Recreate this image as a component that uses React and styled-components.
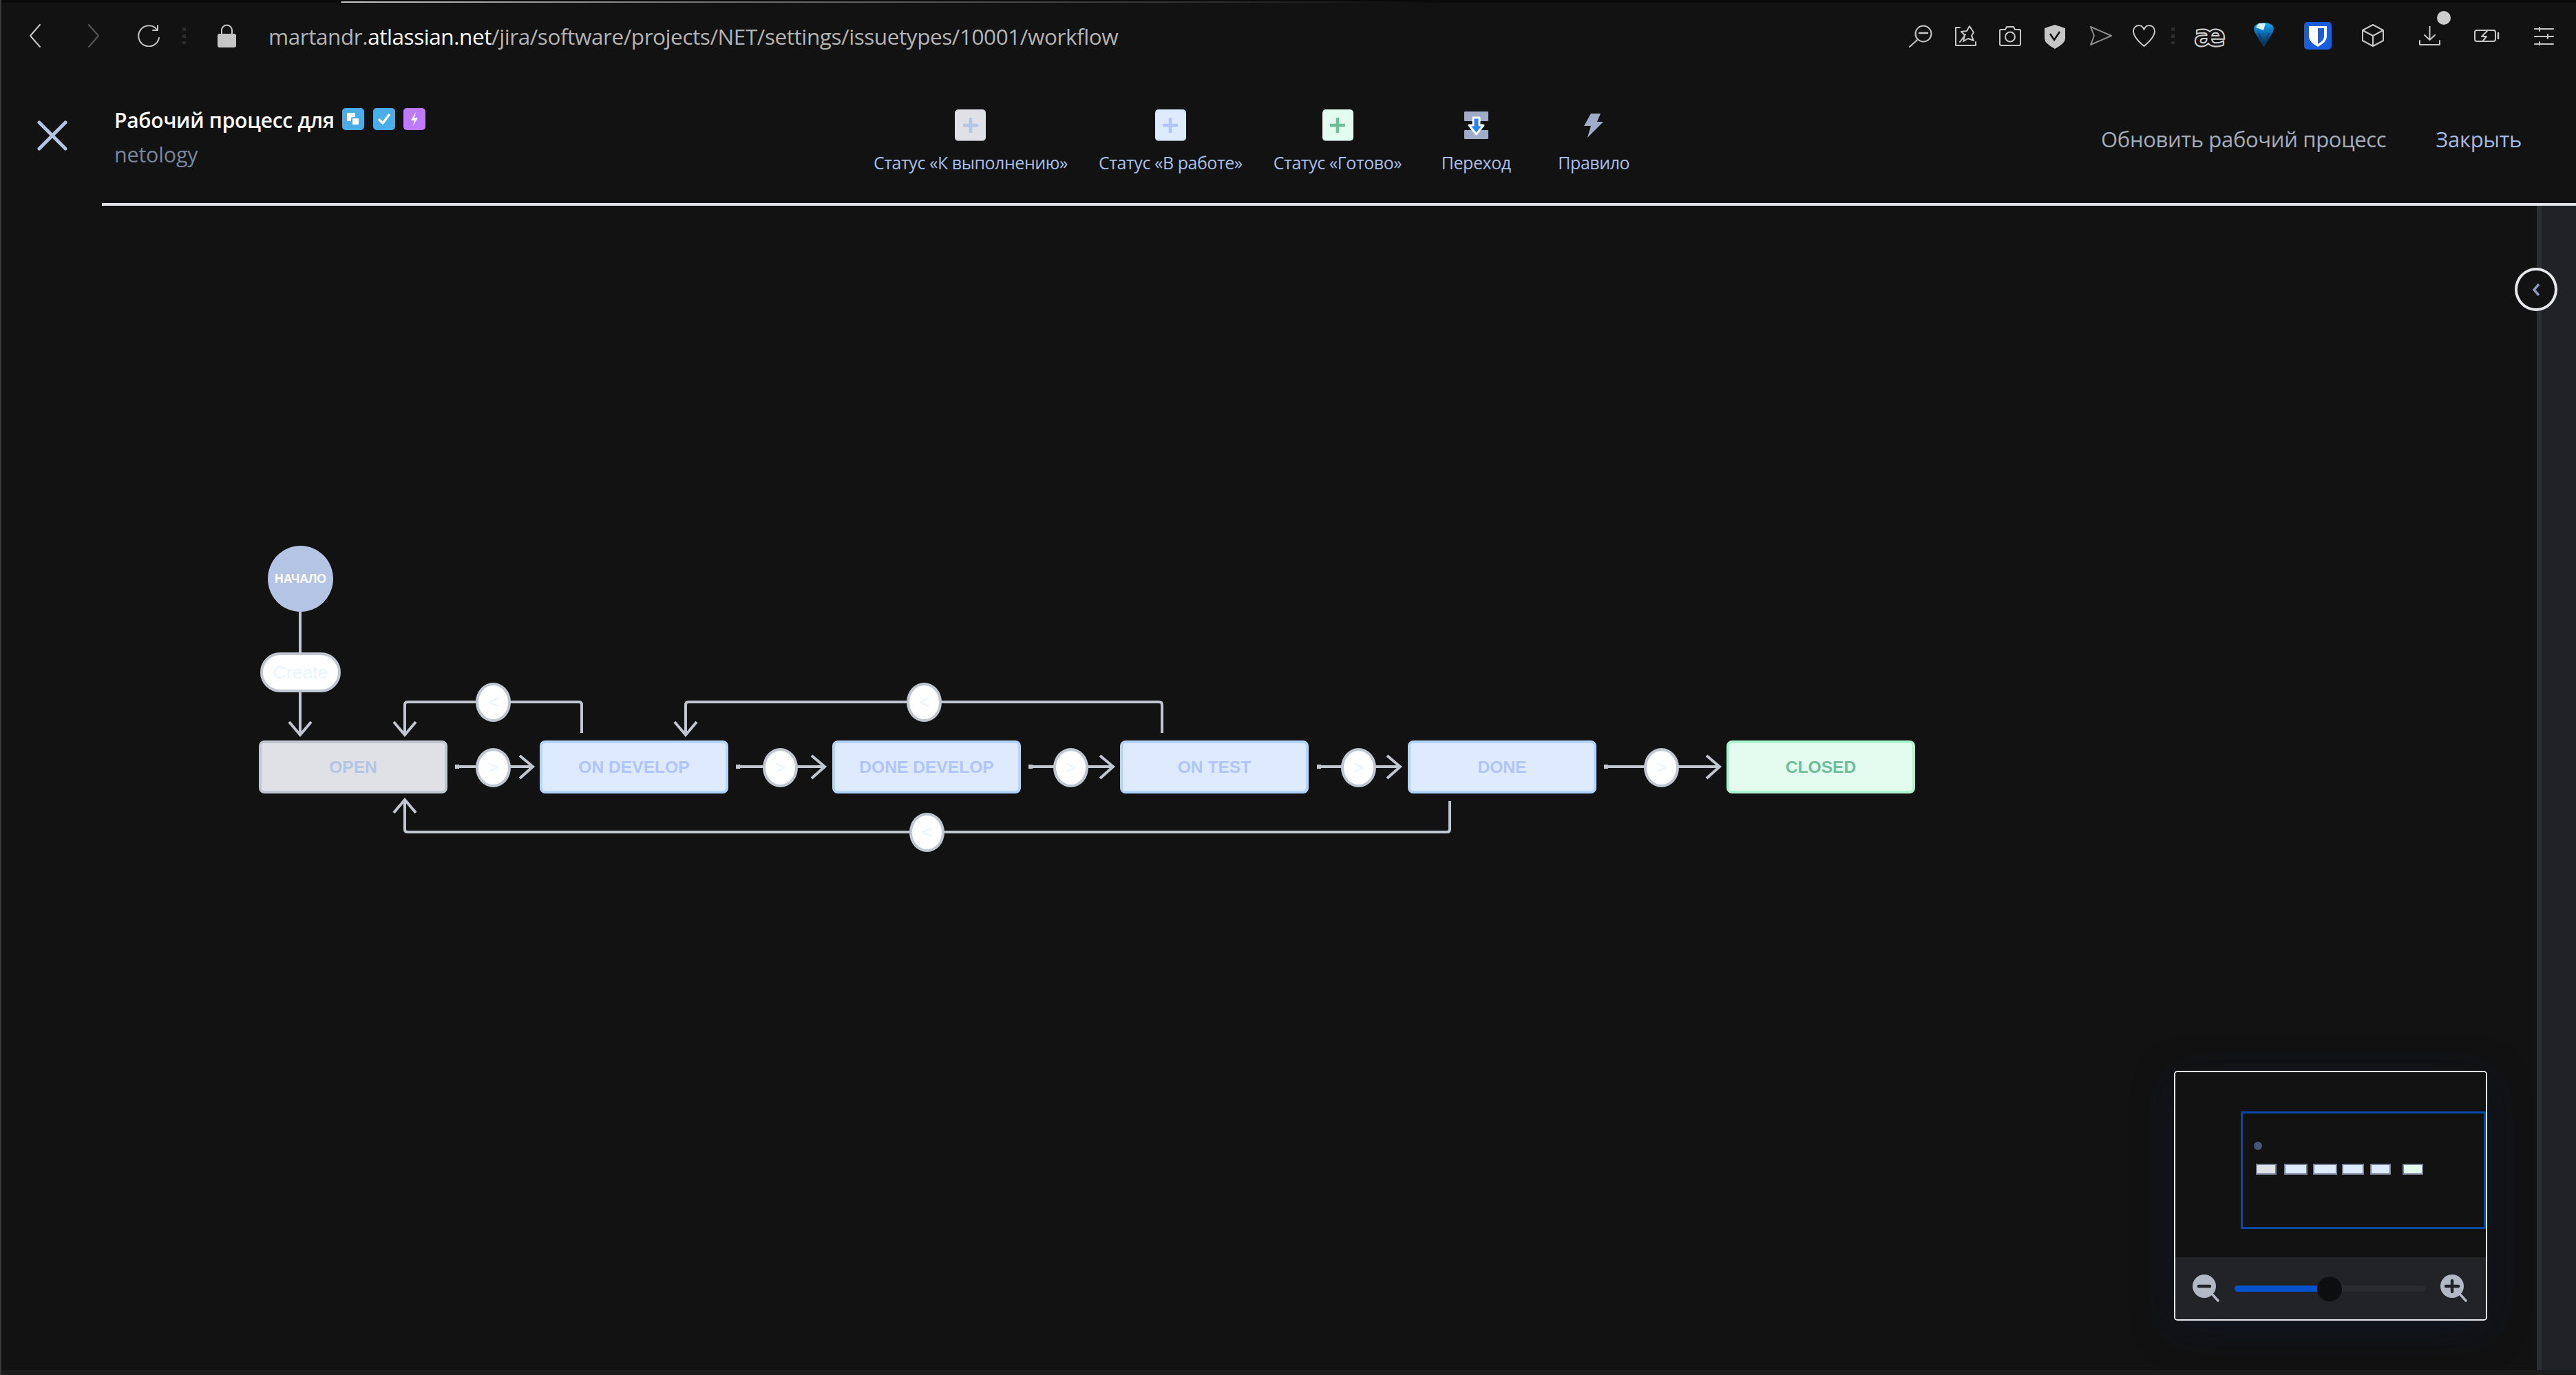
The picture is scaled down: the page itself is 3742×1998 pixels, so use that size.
import React from 'react';
import styled, { createGlobalStyle } from 'styled-components';

const GlobalStyle = createGlobalStyle`
  html, body {
    margin: 0;
    padding: 0;
    background: #121212;
  }
  * { box-sizing: border-box; }
`;

const UI_FONT = `"Open Sans", "Noto Sans", sans-serif`;
const NODE_FONT = `"Liberation Sans", Arial, sans-serif`;
const ICON_GREY = '#c6c6c6';
const EDGE = '#c1c7d0';

const Page = styled.div`
  width: 3742px;
  height: 1998px;
  overflow: hidden;
  display: flex;
  flex-direction: column;
  position: relative;
  background: #121212;
  border-left: 2px solid #3a3a3a;
  font-family: ${UI_FONT};
`;

const TopStrip = styled.div`
  height: 4px;
  flex: none;
  background:
    linear-gradient(to right, transparent 493px, #c8c8c8 494px, #777 1000px, #333 1700px, transparent 2100px) 0 2px / 100% 2px no-repeat,
    #0a0a0a;
`;

/* browser chrome */
const BrowserBar = styled.div`
  height: 96px;
  flex: none;
  display: flex;
  align-items: center;
  padding: 0 32px 0 0;
`;

const BarSlot = styled.div`
  flex: none;
  display: flex;
  align-items: center;
  margin-left: ${p => p.$gap}px;
  position: relative;
  top: ${p => p.$top || 0}px;
`;

const UrlText = styled.div`
  font-size: 31.5px;
  letter-spacing: -0.43px;
  color: #b4b4b4;
  margin-left: 46px;
  white-space: nowrap;
  flex: 1;
`;

const UrlHost = styled.span`
  color: #ffffff;
`;

const Ligature = styled.span`
  font-family: "DejaVu Sans", sans-serif;
  font-size: 44px;
  font-weight: 700;
  line-height: 34px;
  width: 40px;
  text-align: center;
  color: #121212;
  -webkit-text-stroke: 2px #d0d0d0;
`;

const DownloadDot = styled.span`
  position: absolute;
  left: 26px;
  top: -22px;
  width: 20px;
  height: 20px;
  border-radius: 50%;
  background: #cccccc;
`;

/* jira header */
const Header = styled.header`
  height: 195px;
  flex: none;
  display: flex;
  align-items: flex-start;
`;

const CloseCell = styled.div`
  flex: none;
  width: 164px;
  padding: 75px 0 0 52px;
  display: flex;
`;

const TitleCell = styled.div`
  flex: none;
  width: 1103px;
  padding-top: 56px;
`;

const TitleRow = styled.div`
  display: flex;
  align-items: center;
  height: 36px;
`;

const Title = styled.h1`
  margin: 0;
  font-size: 30px;
  font-weight: 600;
  letter-spacing: -0.25px;
  color: #ffffff;
  white-space: nowrap;
`;

const TypeBadge = styled.span`
  width: 32px;
  height: 32px;
  flex: none;
  margin-left: ${p => p.$gap}px;
  border-radius: 5px;
  background: ${p => p.$bg};
  display: flex;
  align-items: center;
  justify-content: center;
  position: relative;
  top: -1px;
`;

const Subtitle = styled.div`
  margin-top: 11px;
  font-size: 30.5px;
  letter-spacing: -0.2px;
  color: #7a869a;
`;

const Toolbar = styled.div`
  flex: none;
  display: flex;
  gap: 45px;
  padding-top: 59px;
`;

const ToolButton = styled.div`
  min-width: 126px;
  display: flex;
  flex-direction: column;
  align-items: center;
`;

const ToolIcon = styled.div`
  height: 46px;
  display: flex;
  align-items: center;
  justify-content: center;
`;

const StatusTile = styled.span`
  width: 45px;
  height: 46px;
  border-radius: 5px;
  background: ${p => p.$bg};
  border-bottom: 1px solid #8a8f99;
  display: flex;
  align-items: center;
  justify-content: center;
`;

const ToolLabel = styled.span`
  margin-top: 17px;
  font-size: 25px;
  line-height: 28px;
  letter-spacing: -0.45px;
  color: #a8bfe8;
  white-space: nowrap;
`;

const Actions = styled.div`
  margin-left: auto;
  display: flex;
  gap: 72px;
  padding: 82px 79px 0 0;
`;

const ActionLink = styled.span`
  font-size: 31px;
  line-height: 40px;
  letter-spacing: -0.33px;
  color: ${p => (p.$primary ? '#a3b9e6' : '#a5adba')};
  white-space: nowrap;
`;

const Divider = styled.div`
  height: 4px;
  flex: none;
  margin-left: 146px;
  background: #e1e3e8;
`;

/* canvas */
const Main = styled.main`
  flex: 1;
  display: flex;
  min-height: 0;
`;

const Canvas = styled.div`
  flex: 1;
  position: relative;
  overflow: hidden;
`;

const EdgeLayer = styled.svg`
  position: absolute;
  left: 0;
  top: 0;
`;

const StartNode = styled.div`
  position: absolute;
  left: ${p => p.$x}px;
  top: ${p => p.$y}px;
  width: 95px;
  height: 96px;
  border-radius: 50%;
  background: #b3c4e4;
  color: #ffffff;
  font: 700 17.5px ${NODE_FONT};
  display: flex;
  align-items: center;
  justify-content: center;
`;

const CreatePill = styled.div`
  position: absolute;
  left: ${p => p.$x}px;
  top: ${p => p.$y}px;
  width: 117px;
  height: 58px;
  border-radius: 29px;
  border: 4px solid ${EDGE};
  background: #ffffff;
  color: #e8f6ff;
  font: 400 26.5px ${NODE_FONT};
  display: flex;
  align-items: center;
  justify-content: center;
`;

const EdgeHandle = styled.div`
  position: absolute;
  left: ${p => p.$x - 25}px;
  top: ${p => p.$y - 28}px;
  width: 51px;
  height: 57px;
  border-radius: 50%;
  border: 4px solid ${EDGE};
  background: #ffffff;
  color: #e6f5ff;
  font: 400 26px ${NODE_FONT};
  display: flex;
  align-items: center;
  justify-content: center;
`;

const STATUS_COLORS = {
  todo: { bg: '#dfe1e6', border: '#c1c7d0', text: '#b3c4e4' },
  progress: { bg: '#deebff', border: '#b3d4ff', text: '#b0c4ff' },
  done: { bg: '#e3fcef', border: '#abf5d1', text: '#6cbf97' },
};

const StatusNode = styled.div`
  position: absolute;
  left: ${p => p.$x}px;
  top: ${p => p.$y}px;
  width: 274px;
  height: 77px;
  border-radius: 8px;
  border: 4px solid ${p => STATUS_COLORS[p.$kind].border};
  background: ${p => STATUS_COLORS[p.$kind].bg};
  color: ${p => STATUS_COLORS[p.$kind].text};
  font: 700 24.6px ${NODE_FONT};
  display: flex;
  align-items: center;
  justify-content: center;
  white-space: nowrap;
`;

/* side panel */
const SidePanel = styled.aside`
  flex: none;
  width: 57px;
  position: relative;
  background: #202226;
  border-left: 7px solid #2c2e33;
`;

const PanelToggle = styled.div`
  position: absolute;
  left: -39px;
  top: 90px;
  width: 62px;
  height: 63px;
  border-radius: 50%;
  border: 4px solid #e6e8ee;
  background: #121212;
  display: flex;
  align-items: center;
  justify-content: center;
`;

const BottomStrip = styled.div`
  height: 7px;
  flex: none;
  background: #1c1c1c;
`;

/* minimap */
const Minimap = styled.div`
  position: absolute;
  right: 72px;
  bottom: 72px;
  width: 455px;
  height: 363px;
  border: 2px solid #e8eaee;
  border-radius: 5px;
  overflow: hidden;
  display: flex;
  flex-direction: column;
  box-shadow: 0 12px 60px rgba(9, 30, 66, 0.35);
`;

const MinimapPreview = styled.div`
  flex: 1;
  position: relative;
  background: #121212;
`;

const MinimapViewport = styled.div`
  position: absolute;
  left: 95px;
  top: 57px;
  width: 356px;
  height: 171px;
  border: 3px solid #0747a6;
`;

const MiniDot = styled.span`
  position: absolute;
  left: ${p => p.$x}px;
  top: ${p => p.$y}px;
  width: 12px;
  height: 12px;
  border-radius: 50%;
  background: #45557a;
  filter: blur(0.5px);
`;

const MiniNode = styled.span`
  position: absolute;
  left: ${p => p.$x}px;
  top: ${p => p.$y}px;
  width: ${p => p.$w}px;
  height: 16px;
  background: ${p => STATUS_COLORS[p.$kind].bg};
  border: 2px solid #77829a;
  filter: blur(0.5px);
`;

const MinimapControls = styled.div`
  height: 90px;
  flex: none;
  background: #212326;
  display: flex;
  align-items: center;
  padding: 0 26px 0 25px;
  gap: 21px;
`;

const ZoomSlider = styled.div`
  flex: 1;
  height: 9px;
  border-radius: 5px;
  background: #2a2c30;
  position: relative;
`;

const ZoomFill = styled.div`
  height: 100%;
  border-radius: 5px 0 0 5px;
  background: #0052cc;
`;

const ZoomThumb = styled.span`
  position: absolute;
  top: -13px;
  width: 36px;
  height: 36px;
  margin-left: -18px;
  border-radius: 50%;
  background: #0d0e0f;
`;

const Stroke = { fill: 'none', stroke: ICON_GREY, strokeWidth: 2, strokeLinecap: 'round', strokeLinejoin: 'round' };

const BackIcon = () => (
  <svg width="20" height="34" viewBox="0 0 20 34">
    <path d="M17 1 L3 17 L17 33" {...Stroke} />
  </svg>
);

const ForwardIcon = () => (
  <svg width="20" height="34" viewBox="0 0 20 34">
    <path d="M3 1 L17 17 L3 33" {...Stroke} stroke="#555" />
  </svg>
);

const ReloadIcon = () => (
  <svg width="32" height="32" viewBox="0 0 32 32">
    <path d="M28 7 A15 15 0 1 0 31 19" {...Stroke} />
    <path d="M29 1 V8 H22" {...Stroke} />
  </svg>
);

const DotsIcon = () => (
  <svg width="6" height="24" viewBox="0 0 6 24">
    <rect y="0" width="5" height="5" fill="#2b2b2b" />
    <rect y="10" width="5" height="5" fill="#2b2b2b" />
    <rect y="20" width="5" height="4" fill="#2b2b2b" />
  </svg>
);

const LockIcon = () => (
  <svg width="29" height="34" viewBox="0 0 29 34">
    <path d="M7 15 V9 A7.5 7.5 0 0 1 22 9 V15" fill="none" stroke={ICON_GREY} strokeWidth="2" />
    <rect x="1" y="14" width="27" height="20" rx="3" fill={ICON_GREY} />
  </svg>
);

const SearchMinusIcon = () => (
  <svg width="34" height="33" viewBox="0 0 34 33">
    <circle cx="21" cy="13" r="11.5" {...Stroke} />
    <path d="M15 12 H27" {...Stroke} strokeWidth="2.5" />
    <path d="M12 22 L1 32" {...Stroke} />
  </svg>
);

const SnapIcon = () => (
  <svg width="31" height="30" viewBox="0 0 31 30">
    <path d="M7 3 H1 V29 H30 V24" {...Stroke} />
    <path d="M21 1 L27 10 L24 15 L27 22 L19 19 L12 23 L14 14 L9 9 L17 8 Z" {...Stroke} />
    <path d="M7 24 L15 13" {...Stroke} />
  </svg>
);

const CameraIcon = () => (
  <svg width="32" height="29" viewBox="0 0 32 29">
    <path d="M2 5 H9 L11 1 H21 L23 5 H30 Q31 5 31 7 V26 Q31 28 29 28 H3 Q1 28 1 26 V7 Q1 5 2 5 Z" {...Stroke} />
    <circle cx="16" cy="15.5" r="7" {...Stroke} />
  </svg>
);

const ShieldIcon = () => (
  <svg width="30" height="35" viewBox="0 0 30 35">
    <path d="M15 0 L30 5 V20 Q30 27 15 35 Q0 27 0 20 V5 Z" fill={ICON_GREY} />
    <path d="M8 13 L14 22 L22 10" fill="none" stroke="#121212" strokeWidth="2.5" />
  </svg>
);

const SendIcon = () => (
  <svg width="32" height="28" viewBox="0 0 32 28">
    <path d="M1 1 L31 14 L1 27 L6 14 Z" {...Stroke} stroke="#8f8f8f" />
  </svg>
);

const HeartIcon = () => (
  <svg width="33" height="32" viewBox="0 0 33 32">
    <path d="M16.5 31 C8 24 1 17 1 9 C1 4 5 1 9 1 C12 1 15 3 16.5 7 C18 3 21 1 24 1 C28 1 32 4 32 9 C32 17 25 24 16.5 31 Z" {...Stroke} />
  </svg>
);

const GemIcon = () => (
  <svg width="33" height="36" viewBox="0 0 33 36">
    <defs>
      <linearGradient id="gemBody" x1="0" y1="0" x2="0" y2="1">
        <stop offset="0" stopColor="#1ca8f2" />
        <stop offset="0.4" stopColor="#0b6db5" />
        <stop offset="1" stopColor="#061a30" />
      </linearGradient>
    </defs>
    <path d="M16.5 36 L4 15 Q1 9 3 5 Q7 0 16.5 0 Q26 0 30 5 Q32 9 29 15 Z" fill="url(#gemBody)" />
    <path d="M9 1 L19 1 L16 11 L5 7 Z" fill="#d9f4ff" />
    <path d="M16.5 34 L9 15 M16.5 34 L24 15" stroke="#0a3d66" strokeWidth="1.5" />
  </svg>
);

const BitwardenIcon = () => (
  <svg width="40" height="40" viewBox="0 0 40 40">
    <rect width="40" height="40" rx="5" fill="#175ddc" />
    <path d="M7 6 H33 V21 Q33 29 20 36 Q7 29 7 21 Z" fill="#ffffff" />
    <path d="M20 9 H29 V21 Q29 27 20 32 Z" fill="#175ddc" />
  </svg>
);

const CubeIcon = () => (
  <svg width="32" height="33" viewBox="0 0 32 33">
    <path d="M16 1 L31 9 V24 L16 32 L1 24 V9 Z" {...Stroke} />
    <path d="M1 9 L16 17 L31 9 M16 17 V32" {...Stroke} />
  </svg>
);

const DownloadIcon = () => (
  <svg width="31" height="28" viewBox="0 0 31 28">
    <path d="M15.5 0 V20 M8 13 L15.5 20 L23 13" {...Stroke} />
    <path d="M1 21 V27 H30 V21" {...Stroke} />
  </svg>
);

const BatteryIcon = () => (
  <svg width="37" height="18" viewBox="0 0 37 18">
    <rect x="1" y="1" width="30" height="16" rx="3" {...Stroke} />
    <path d="M35 5 V13" {...Stroke} strokeWidth="2.5" />
    <path d="M19 2 L11 10 H18 L13 16" {...Stroke} />
  </svg>
);

const SlidersIcon = () => (
  <svg width="29" height="27" viewBox="0 0 29 27">
    <path d="M1 3 H28 M1 14 H28 M1 25 H28" {...Stroke} />
    <path d="M8 0 V6 M20 11 V17 M8 22 V27" {...Stroke} />
  </svg>
);

const CloseIcon = () => (
  <svg width="44" height="44" viewBox="0 0 44 44">
    <path d="M3 3 L41 41 M41 3 L3 41" fill="none" stroke="#b3c4e4" strokeWidth="5" strokeLinecap="round" />
  </svg>
);

const StoryGlyph = () => (
  <svg width="24" height="24" viewBox="0 0 24 24">
    <rect x="3" y="3" width="12" height="12" rx="1.5" fill="#ffffff" />
    <rect x="10" y="10" width="11" height="11" rx="1.5" fill="#ffffff" stroke="#4bade8" strokeWidth="2" />
  </svg>
);

const CheckGlyph = () => (
  <svg width="24" height="24" viewBox="0 0 24 24">
    <path d="M5 13 L10 18 L19 6" fill="none" stroke="#ffffff" strokeWidth="3.5" strokeLinecap="round" strokeLinejoin="round" />
  </svg>
);

const BoltGlyph = () => (
  <svg width="24" height="24" viewBox="0 0 24 24">
    <path d="M14 2 L7 14 H12 L10 22 L17 10 H12 Z" fill="#ffffff" />
  </svg>
);

const PlusIcon = ({ color }) => (
  <svg width="22" height="22" viewBox="0 0 22 22">
    <path d="M11 1 V21 M1 11 H21" stroke={color} strokeWidth="4.5" strokeLinecap="round" />
  </svg>
);

const TransitionIcon = () => (
  <svg width="35" height="46" viewBox="0 0 35 46">
    <rect y="3" width="35" height="14" rx="1" fill="#9fadca" />
    <rect y="30" width="35" height="13" rx="1" fill="#9fadca" />
    <path d="M13 12 H22 V23 H28 L17.5 36 L7 23 H13 Z" fill="#2684ff" stroke="#ffffff" strokeWidth="3" strokeLinejoin="round" />
  </svg>
);

const RuleIcon = () => (
  <svg width="28" height="36" viewBox="0 0 28 36">
    <path d="M10 1 H24 L19 13 H28 L5 36 L10 19 H0 Z" fill="#9fadca" />
  </svg>
);

const ChevronSmall = () => (
  <svg width="14" height="20" viewBox="0 0 14 20">
    <path d="M11 2 L4 10 L11 18" fill="none" stroke="#8a9bbd" strokeWidth="3.5" />
  </svg>
);

const ZoomIcon = ({ plus }) => (
  <svg width="40" height="40" viewBox="0 0 40 40">
    <circle cx="17" cy="17" r="17" fill="#b3b9c4" />
    <path d="M28 28 L37 38" stroke="#b3b9c4" strokeWidth="3.5" strokeLinecap="round" />
    <path d={plus ? 'M8 17 H26 M17 9 V25' : 'M9 17 H25'} stroke="#212326" strokeWidth="4.5" strokeLinecap="round" />
  </svg>
);

// canvas coordinates are page coordinates minus these offsets
const CANVAS_LEFT = 2;
const CANVAS_TOP = 299;

const STATUSES = [
  { name: 'OPEN', kind: 'todo', x: 376 },
  { name: 'ON DEVELOP', kind: 'progress', x: 784 },
  { name: 'DONE DEVELOP', kind: 'progress', x: 1209 },
  { name: 'ON TEST', kind: 'progress', x: 1627 },
  { name: 'DONE', kind: 'progress', x: 2045 },
  { name: 'CLOSED', kind: 'done', x: 2508 },
];

const FORWARD_EDGES = [
  { from: 661, to: 775, handle: 716 },
  { from: 1069, to: 1199, handle: 1133 },
  { from: 1494, to: 1618, handle: 1555 },
  { from: 1913, to: 2035, handle: 1973 },
  { from: 2330, to: 2499, handle: 2413 },
];

const BACK_HANDLES = [
  { x: 716, y: 1020, mark: '<' },
  { x: 1342, y: 1020, mark: '<' },
  { x: 1346, y: 1209, mark: '<' },
];

const MINI_NODES = [
  { kind: 'todo', x: 22, w: 30 },
  { kind: 'progress', x: 63, w: 34 },
  { kind: 'progress', x: 105, w: 35 },
  { kind: 'progress', x: 147, w: 32 },
  { kind: 'progress', x: 188, w: 30 },
  { kind: 'done', x: 235, w: 30 },
];

const BROWSER_RIGHT = [
  { gap: 0, icon: <SearchMinusIcon /> },
  { gap: 33, icon: <SnapIcon /> },
  { gap: 33, icon: <CameraIcon /> },
  { gap: 34, icon: <ShieldIcon />, top: 1 },
  { gap: 36, icon: <SendIcon /> },
  { gap: 30, icon: <HeartIcon /> },
  { gap: 23, icon: <DotsIcon /> },
  { gap: 27, icon: <Ligature>æ</Ligature> },
  { gap: 45, icon: <GemIcon />, top: -1 },
  { gap: 42, icon: <BitwardenIcon /> },
  { gap: 44, icon: <CubeIcon />, top: -1 },
  { gap: 51, icon: <DownloadIcon /> },
  { gap: 49, icon: <BatteryIcon /> },
  { gap: 50, icon: <SlidersIcon /> },
];

function App() {
  const viewH = 1998 - 7 - CANVAS_TOP;
  return (
    <>
      <GlobalStyle />
      <Page>
        <TopStrip />
        <BrowserBar>
          <BarSlot $gap={39}><BackIcon /></BarSlot>
          <BarSlot $gap={65}><ForwardIcon /></BarSlot>
          <BarSlot $gap={54}><ReloadIcon /></BarSlot>
          <BarSlot $gap={33}><DotsIcon /></BarSlot>
          <BarSlot $gap={44}><LockIcon /></BarSlot>
          <UrlText>martandr.<UrlHost>atlassian.net</UrlHost>/jira/software/projects/NET/settings/issuetypes/10001/workflow</UrlText>
          {BROWSER_RIGHT.map((item, i) => (
            <BarSlot key={i} $gap={item.gap} $top={item.top}>
              {item.icon}
              {i === 11 && <DownloadDot />}
            </BarSlot>
          ))}
        </BrowserBar>

        <Header>
          <CloseCell><CloseIcon /></CloseCell>
          <TitleCell>
            <TitleRow>
              <Title>Рабочий процесс для</Title>
              <TypeBadge $gap={11} $bg="#4bade8"><StoryGlyph /></TypeBadge>
              <TypeBadge $gap={13} $bg="#4bade8"><CheckGlyph /></TypeBadge>
              <TypeBadge $gap={12} $bg="#bf7bff"><BoltGlyph /></TypeBadge>
            </TitleRow>
            <Subtitle>netology</Subtitle>
          </TitleCell>
          <Toolbar>
            <ToolButton>
              <ToolIcon><StatusTile $bg="#dfe1e6"><PlusIcon color="#b3c4e4" /></StatusTile></ToolIcon>
              <ToolLabel>Статус «К выполнению»</ToolLabel>
            </ToolButton>
            <ToolButton>
              <ToolIcon><StatusTile $bg="#deebff"><PlusIcon color="#b0c4ff" /></StatusTile></ToolIcon>
              <ToolLabel>Статус «В работе»</ToolLabel>
            </ToolButton>
            <ToolButton>
              <ToolIcon><StatusTile $bg="#e3fcef"><PlusIcon color="#6cbf97" /></StatusTile></ToolIcon>
              <ToolLabel>Статус «Готово»</ToolLabel>
            </ToolButton>
            <ToolButton>
              <ToolIcon><TransitionIcon /></ToolIcon>
              <ToolLabel>Переход</ToolLabel>
            </ToolButton>
            <ToolButton>
              <ToolIcon><RuleIcon /></ToolIcon>
              <ToolLabel>Правило</ToolLabel>
            </ToolButton>
          </Toolbar>
          <Actions>
            <ActionLink>Обновить рабочий процесс</ActionLink>
            <ActionLink $primary>Закрыть</ActionLink>
          </Actions>
        </Header>
        <Divider />

        <Main>
          <Canvas>
            <EdgeLayer width="3684" height={viewH} viewBox={`${CANVAS_LEFT} ${CANVAS_TOP} 3684 ${viewH}`}>
              <g fill="none" stroke={EDGE} strokeWidth="4">
                {/* start to open */}
                <path d="M436 889 V1067" />
                <path d="M420 1049 L436 1068 L452 1049" />

                {/* forward edges */}
                {FORWARD_EDGES.map(e => (
                  <g key={e.from}>
                    <path d={`M${e.from} 1114 H${e.to - 2}`} />
                    <path d={`M${e.from} 1114 h6`} strokeWidth="6" />
                    <path d={`M${e.to - 20} 1098 L${e.to - 1} 1114 L${e.to - 20} 1131`} />
                  </g>
                ))}

                {/* back edges */}
                <path d="M845 1065 V1024 Q845 1020 841 1020 H592 Q588 1020 588 1024 V1066" />
                <path d="M572 1049 L588 1068 L604 1049" />
                <path d="M1688 1065 V1024 Q1688 1020 1684 1020 H1000 Q996 1020 996 1024 V1066" />
                <path d="M980 1049 L996 1068 L1012 1049" />
                <path d="M2106 1164 V1205 Q2106 1209 2102 1209 H592 Q588 1209 588 1205 V1164" />
                <path d="M572 1181 L588 1162 L604 1181" />
              </g>
            </EdgeLayer>

            <StartNode $x={387} $y={793 - CANVAS_TOP}>НАЧАЛО</StartNode>
            <CreatePill $x={376} $y={948 - CANVAS_TOP}>Create</CreatePill>

            {STATUSES.map(s => (
              <StatusNode key={s.name} $kind={s.kind} $x={s.x - CANVAS_LEFT} $y={1076 - CANVAS_TOP}>{s.name}</StatusNode>
            ))}

            {FORWARD_EDGES.map(e => (
              <EdgeHandle key={e.from} $x={e.handle - CANVAS_LEFT} $y={1115 - CANVAS_TOP}>&gt;</EdgeHandle>
            ))}
            {BACK_HANDLES.map(h => (
              <EdgeHandle key={h.x} $x={h.x - CANVAS_LEFT} $y={h.y - CANVAS_TOP}>{h.mark}</EdgeHandle>
            ))}

            <Minimap>
              <MinimapPreview>
                <MinimapViewport />
                <MiniDot $x={114} $y={101} />
                {MINI_NODES.map(n => (
                  <MiniNode key={n.x} $kind={n.kind} $x={n.x + 95} $y={133} $w={n.w} />
                ))}
              </MinimapPreview>
              <MinimapControls>
                <ZoomIcon />
                <ZoomSlider>
                  <ZoomFill style={{ width: '49.8%' }} />
                  <ZoomThumb style={{ left: '49.8%' }} />
                </ZoomSlider>
                <ZoomIcon plus />
              </MinimapControls>
            </Minimap>
          </Canvas>
          <SidePanel>
            <PanelToggle><ChevronSmall /></PanelToggle>
          </SidePanel>
        </Main>
        <BottomStrip />
      </Page>
    </>
  );
}

export default App;
